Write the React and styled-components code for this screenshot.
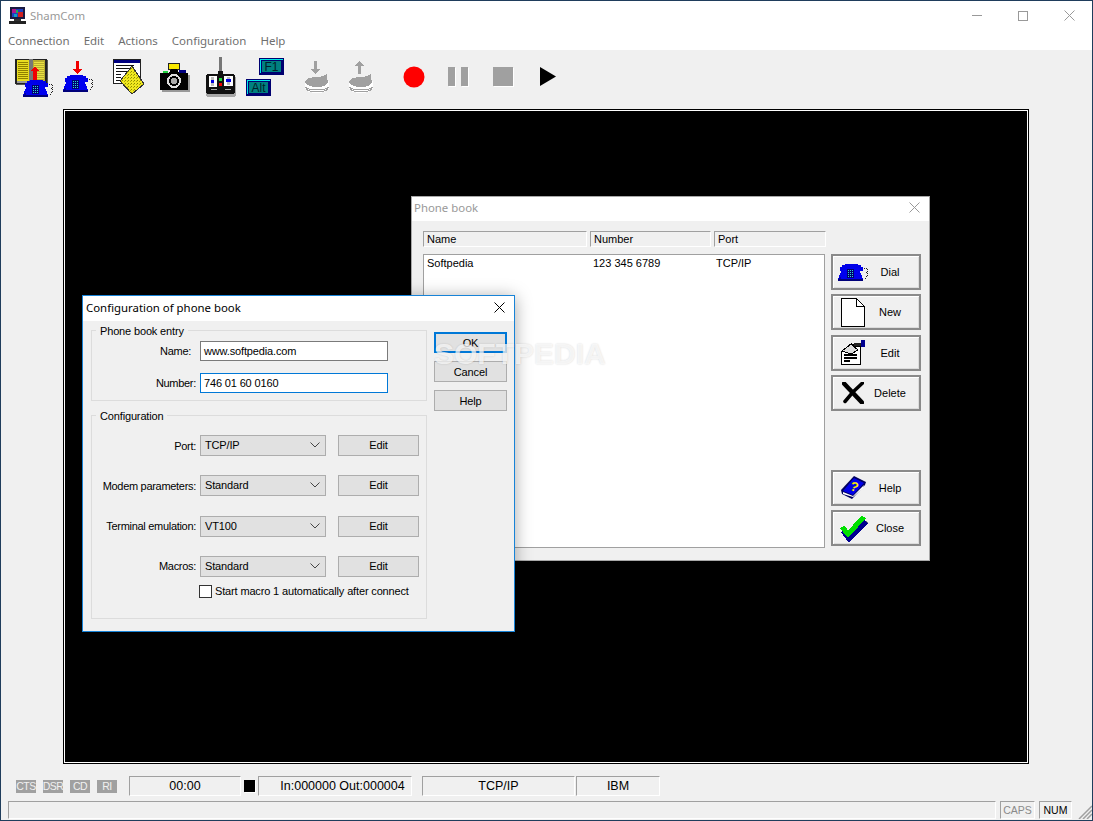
import React from "react";
import styled, { createGlobalStyle } from "styled-components";

const GlobalStyle = createGlobalStyle`
  html, body { margin: 0; padding: 0; background: #f0f0f0; }
  * { box-sizing: border-box; }
  #root { width: 1093px; height: 821px; }
`;

const UI_FONT = `"Liberation Sans", Arial, sans-serif`;
const TITLE_FONT = `"Noto Sans", "Open Sans", sans-serif`;

// Main window
const Window = styled.div`
  position: relative;
  width: 1093px;
  height: 821px;
  overflow: hidden;
  display: flex;
  flex-direction: column;
  background: #f0f0f0;
  border: 1px solid #1f3d5c;
  font-family: ${UI_FONT};
  font-size: 11px;
  color: #000;
`;

const TitleBar = styled.div`
  height: 29px;
  flex: none;
  display: flex;
  align-items: center;
  background: #fff;
  padding-left: 8px;
`;

const TitleText = styled.span`
  font-family: ${TITLE_FONT};
  font-size: 11.4px;
  color: #999;
  margin-left: 4px;
`;

const Controls = styled.div`
  margin-left: auto;
  display: flex;
`;

const ControlButton = styled.div`
  width: 46px;
  height: 29px;
  display: flex;
  align-items: center;
  justify-content: center;
`;

const MenuBar = styled.div`
  height: 20px;
  flex: none;
  display: flex;
  align-items: center;
  gap: 14px;
  padding: 1px 0 0 7px;
  background: #fff;
`;

const MenuItem = styled.span`
  font-family: ${TITLE_FONT};
  font-size: 11.5px;
  color: #6f6f6f;
`;

const Toolbar = styled.div`
  height: 54px;
  flex: none;
  display: flex;
  align-items: center;
  padding-left: 11px;
`;

const ToolGroup = styled.div`
  display: flex;
  gap: ${(p) => p.$gap || 0}px;
  margin-left: ${(p) => p.$left || 0}px;
`;

const Tool = styled.div`
  width: 44px;
  height: 54px;
  display: flex;
  align-items: center;
  justify-content: center;
`;

const Pixel = styled.svg`
  display: block;
  flex: none;
  shape-rendering: crispEdges;
`;

const Smooth = styled.svg`
  display: block;
  flex: none;
`;

const TerminalArea = styled.div`
  flex: none;
  padding: 5px 63px 0 62px;
`;

const Terminal = styled.div`
  height: 655px;
  background: #000;
  border: 1px solid #000;
  box-shadow: inset 0 0 0 1px #fff;
`;

// Status rows
const StatusRow = styled.div`
  flex: none;
  height: 20px;
  margin-top: 12px;
  display: flex;
  align-items: center;
  padding-left: 15px;
`;

const Led = styled.span`
  width: 20px;
  height: 13px;
  margin-right: 7px;
  background: #a0a0a0;
  color: #f0f0f0;
  display: flex;
  align-items: center;
  justify-content: center;
  font-size: 10.5px;
  letter-spacing: -0.5px;
  white-space: nowrap;
`;

const Sunken = styled.div`
  height: 100%;
  border-top: 1px solid #a0a0a0;
  border-left: 1px solid #a0a0a0;
  border-right: 1px solid #fff;
  border-bottom: 1px solid #fff;
`;

const StatusCell = styled(Sunken)`
  width: ${(p) => p.$width}px;
  margin-left: ${(p) => p.$left}px;
  padding-left: ${(p) => p.$inset || 0}px;
  padding-bottom: 1px;
  display: flex;
  align-items: center;
  justify-content: center;
  font-size: 12.5px;
`;

const Indicator = styled.span`
  width: 11px;
  height: 12px;
  margin-left: 3px;
  background: #000;
  box-shadow: 1px 1px 0 #fff;
`;

const BottomRow = styled.div`
  flex: none;
  height: 18px;
  margin-top: 5px;
  display: flex;
  padding-left: 7px;
`;

const MessageArea = styled(Sunken)`
  width: 988px;
`;

const KeyCell = styled(Sunken)`
  width: ${(p) => p.$width}px;
  margin-left: ${(p) => p.$left}px;
  display: flex;
  align-items: center;
  justify-content: center;
  font-size: 10.5px;
  color: ${(p) => (p.$on ? "#000" : "#8a8a8a")};
`;

const Grip = styled.div`
  margin-left: auto;
  align-self: flex-end;
`;

// Dialogs lying on the terminal
const Dialog = styled.div`
  position: absolute;
  left: ${(p) => p.$x}px;
  top: ${(p) => p.$y}px;
  width: ${(p) => p.$w}px;
  height: ${(p) => p.$h}px;
  background: #f0f0f0;
  border: 1px solid ${(p) => (p.$active ? "#1883d7" : "#a8a8a8")};
  box-shadow: ${(p) => (p.$active ? "0 2px 16px rgba(0, 0, 0, 0.35)" : "none")};
  display: flex;
  flex-direction: column;
`;

const DialogTitle = styled.div`
  flex: none;
  height: ${(p) => p.$h}px;
  background: #fff;
  display: flex;
  align-items: center;
  justify-content: space-between;
  padding: 0 9px ${(p) => (p.$active ? 2 : 4)}px ${(p) => (p.$active ? 3 : 2)}px;
  font-family: ${TITLE_FONT};
  font-size: 11.4px;
  color: ${(p) => (p.$active ? "#000" : "#999")};
`;

const BookBody = styled.div`
  flex: 1;
  display: flex;
  padding: 10px 8px 12px 11px;
`;

const BookMain = styled.div`
  width: 403px;
  display: flex;
  flex-direction: column;
  gap: 7px;
`;

const HeaderRow = styled.div`
  height: 16px;
  display: flex;
  gap: 3px;
`;

const HeaderCell = styled(Sunken)`
  width: ${(p) => p.$width}px;
  padding-left: 3px;
  display: flex;
  align-items: center;
`;

const EntryList = styled.div`
  flex: 1;
  width: 402px;
  background: #fff;
  border: 1px solid #a0a0a0;
  padding: 1px 3px;
`;

const EntryRow = styled.div`
  display: grid;
  grid-template-columns: 166px 123px 1fr;
  height: 14px;
  align-items: center;
`;

const BookButtons = styled.div`
  width: 90px;
  margin: 23px 0 0 5px;
  display: flex;
  flex-direction: column;
  height: 292px;
  justify-content: space-between;
`;

const ButtonStack = styled.div`
  display: flex;
  flex-direction: column;
  gap: ${(p) => p.$gap}px;
`;

const PanelButton = styled.div`
  height: 36px;
  display: flex;
  align-items: center;
  padding: 0 8px 0 4px;
  background: #f0f0f0;
  border: 2px solid #8a8a8a;
  box-shadow: inset 1px 1px 0 #fff, inset -1px -1px 0 #dcdcdc;
`;

const PanelIcon = styled.div`
  width: 32px;
  display: flex;
  justify-content: center;
`;

const PanelLabel = styled.span`
  flex: 1;
  text-align: center;
`;

const ConfigBody = styled.div`
  flex: 1;
  display: flex;
  gap: 7px;
  padding: 3px 0 0 8px;
  letter-spacing: -0.15px;
`;

const ConfigMain = styled.div`
  width: 336px;
  display: flex;
  flex-direction: column;
  gap: 8px;
`;

const Group = styled.fieldset`
  margin: 0;
  padding: ${(p) => p.$pad};
  height: ${(p) => p.$h}px;
  border: 1px solid #dcdcdc;
  min-width: 0;
`;

const GroupLegend = styled.legend`
  padding: 0 4px;
  margin-left: 4px;
  font-size: 11px;
  line-height: 13px;
  transform: translateY(1px);
`;

const Rows = styled.div`
  display: flex;
  flex-direction: column;
  gap: ${(p) => p.$gap}px;
`;

const FieldRow = styled.div`
  display: flex;
  align-items: center;
`;

const FieldLabel = styled.span`
  width: 104px;
  padding-right: ${(p) => p.$pad || 0}px;
  text-align: right;
  white-space: nowrap;
  margin-right: 4px;
  letter-spacing: -0.3px;
`;

const TextField = styled.div`
  width: 188px;
  height: 20px;
  padding-left: 3px;
  display: flex;
  align-items: center;
  background: #fff;
  border: 1px solid ${(p) => (p.$focus ? "#0078d7" : "#7a7a7a")};
`;

const SelectBox = styled.div`
  width: 126px;
  height: 21px;
  padding: 0 5px 1px 4px;
  display: flex;
  align-items: center;
  justify-content: space-between;
  background: #e1e1e1;
  border: 1px solid #adadad;
`;

const EditButton = styled.div`
  width: 81px;
  height: 21px;
  margin-left: 12px;
  padding-bottom: 1px;
  display: flex;
  align-items: center;
  justify-content: center;
  background: #e1e1e1;
  border: 1px solid #adadad;
`;

const CheckRow = styled.div`
  display: flex;
  align-items: center;
  gap: 3px;
  margin: 8px 0 0 107px;
`;

const CheckBox = styled.span`
  width: 13px;
  height: 13px;
  background: #fff;
  border: 1px solid #333;
`;

const ConfigButtons = styled.div`
  width: 73px;
  margin-top: 8px;
  display: flex;
  flex-direction: column;
  gap: 8px;
`;

const DialogButton = styled.div`
  height: 21px;
  display: flex;
  align-items: center;
  justify-content: center;
  background: #e1e1e1;
  border: ${(p) => (p.$default ? "2px solid #0078d7" : "1px solid #adadad")};
`;

const Watermark = styled.div`
  position: absolute;
  left: 433px;
  top: 335px;
  font-size: 30px;
  font-weight: 700;
  line-height: 36px;
  color: rgba(255, 255, 255, 0.72);
  text-shadow: 0 0 2px rgba(0, 0, 0, 0.16);
  pointer-events: none;
`;

// Pixel drawings
const PhoneShape = ({ x = 0, y = 0 }) => (
  <g transform={`translate(${x} ${y})`}>
    <path d="M26 5h2v1h1v3h-1v1h1v3h-1v2h-2" fill="none" stroke="#222" strokeDasharray="1 1" />
    <path d="M2 8V4h2V2h3V1h13v1h3v2h2v4h-6V5H9v3z" fill="#0000e8" />
    <path d="M7 5h14v2h1v3h1v2h1v3h1v3H0v-3h1v-3h1v-2h1V8h1V7h3z" fill="#0000f0" />
    <rect x="0" y="16" width="25" height="2" fill="#00007a" />
    <rect x="1" y="14" width="2" height="2" fill="#0000a8" />
    <rect x="9" y="6" width="7" height="9" fill="#000070" />
    {[0, 1, 2, 3].map((r) =>
      [0, 1, 2].map((c) => (
        <rect key={`${r}${c}`} x={10 + c * 2} y={7 + r * 2} width="1" height="1" fill="#30d8d0" />
      ))
    )}
  </g>
);

const BookPhoneIcon = () => (
  <Pixel width="38" height="40" viewBox="0 0 38 40">
    <rect x="1" y="3" width="32" height="25" fill="#555" />
    <rect x="0" y="2" width="32" height="25" fill="#222" />
    <rect x="2" y="3" width="12" height="21" fill="#e8dc20" />
    <rect x="18" y="3" width="12" height="21" fill="#b8ac30" />
    <rect x="14" y="2" width="4" height="24" fill="#777" />
    <rect x="2" y="24" width="28" height="2" fill="#999" />
    {[5, 7, 9, 11, 13, 15, 17, 19, 21].map((y) => (
      <React.Fragment key={y}>
        <rect x="3" y={y} width="10" height="1" fill="#908000" />
        <rect x="19" y={y} width="10" height="1" fill="#e8e040" />
      </React.Fragment>
    ))}
    <path d="M18 24v-10h-2l4-5 4 5h-2v10z" fill="#f00000" />
    <PhoneShape x="8" y="22" />
  </Pixel>
);

const PhoneDownIcon = () => (
  <Pixel width="30" height="32" viewBox="0 0 30 32">
    <path d="M13 0h3v8h3l-4.500 5L10 8h3z" fill="#f00000" />
    <PhoneShape x="0" y="13" />
  </Pixel>
);

const ScriptIcon = () => (
  <Pixel width="33" height="36" viewBox="0 0 33 36">
    <defs>
      <pattern id="speck" width="3" height="3" patternUnits="userSpaceOnUse">
        <rect width="3" height="3" fill="#f0e820" />
        <rect x="0" y="0" width="1" height="1" fill="#8a8a00" />
        <rect x="2" y="1" width="1" height="1" fill="#b0a800" />
      </pattern>
    </defs>
    <rect x="0" y="0" width="27" height="24" fill="#fff" stroke="#222" />
    <rect x="1" y="1" width="26" height="3" fill="#000080" />
    {[6, 9, 12, 15, 18, 21].map((y, i) => (
      <rect key={y} x="3" y={y} width={i > 2 ? 5 : 18} height="1" fill="#111" />
    ))}
    <path d="M19 7l12 18-12 10L7 22z" fill="url(#speck)" stroke="#333" />
  </Pixel>
);

const CameraIcon = () => (
  <Pixel width="30" height="29" viewBox="0 0 30 29">
    <rect x="8" y="0" width="11" height="6" fill="#f8e800" stroke="#222" />
    <rect x="3" y="8" width="5" height="2" fill="#20d040" />
    <rect x="19" y="7" width="7" height="3" fill="#000080" />
    <rect x="2" y="12" width="28" height="17" fill="#999" />
    <path d="M0 10h9l2-4h6l2 4h9v17H0z" fill="#000" />
    <circle cx="14" cy="18" r="7" fill="#ddd" />
    <circle cx="14" cy="18" r="5" fill="#000" />
    <circle cx="14" cy="18" r="3" fill="#aaa" />
  </Pixel>
);

const RemoteIcon = () => (
  <Pixel width="31" height="40" viewBox="0 0 31 40">
    <rect x="13" y="0" width="3" height="15" fill="#777" />
    <rect x="0" y="19" width="30" height="21" rx="3" fill="#a8a8a8" />
    <rect x="0" y="17" width="29" height="20" rx="3" fill="#111" />
    <rect x="12" y="14" width="5" height="5" fill="#111" />
    <rect x="3" y="19" width="8" height="11" fill="#fff" />
    <rect x="5" y="20" width="3" height="9" fill="#bbb" />
    <rect x="5" y="23" width="3" height="3" fill="#0000e0" />
    <rect x="18" y="19" width="9" height="10" fill="#fff" />
    <rect x="21" y="20" width="3" height="8" fill="#bbb" />
    <rect x="20" y="22" width="5" height="3" fill="#0000e0" />
    <rect x="13" y="21" width="3" height="3" fill="#20e040" />
    <rect x="13" y="26" width="3" height="3" fill="#f00000" />
    <rect x="5" y="32" width="6" height="1" fill="#aaa" />
    <rect x="19" y="32" width="6" height="1" fill="#aaa" />
  </Pixel>
);

const FKey = ({ x, y, label }) => (
  <g transform={`translate(${x} ${y})`}>
    <rect width="25" height="17" fill="#000070" />
    <path d="M1 1h23v1H2v13H1z" fill="#00e8e8" />
    <rect x="2" y="2" width="22" height="14" fill="#000070" />
    <rect x="3" y="3" width="19" height="11" fill="#008080" />
    <text x="12.500" y="13" textAnchor="middle" fontSize="12" fontFamily={UI_FONT} fill="#00202a">
      {label}
    </text>
  </g>
);

const KeysIcon = () => (
  <Pixel width="38" height="38" viewBox="0 0 38 38">
    <FKey x="13" y="0" label="F1" />
    <FKey x="0" y="21" label="Alt" />
  </Pixel>
);

const DiskIcon = ({ up }) => (
  <Pixel width="26" height="33" viewBox="0 0 26 33">
    <path
      d={up ? "M10 13V5H7l4.500-5L16 5h-3v8z" : "M10 0h3v8h3l-4.500 5L7 8h3z"}
      fill="#a0a0a0"
    />
    <path d="M1 21c0-3 5-5 12-5 4 0 6-1 8-2l2-2v6c1 1 2 2 2 3v6c0 2-5 5-12 5S1 30 1 27z" fill="#fff" />
    <path d="M1 21c0-3 5-5 12-5 4 0 6-1 8-2l2-2v6c1 1 1 2 1 3 0 3-5 5-11 5S1 24 1 21z" fill="#a0a0a0" />
    <path d="M1 26c2 2 6 3 12 3s10-1 12-3M2 28c2 2 6 3 11 3s9-1 11-3" fill="none" stroke="#a0a0a0" />
  </Pixel>
);

const RecordIcon = () => (
  <Smooth width="22" height="22" viewBox="0 0 22 22">
    <circle cx="11" cy="11" r="10.500" fill="#ff0000" />
  </Smooth>
);

const PauseIcon = () => (
  <Pixel width="21" height="20" viewBox="0 0 21 20">
    <rect x="1" y="1" width="7" height="19" fill="#fff" />
    <rect x="14" y="1" width="7" height="19" fill="#fff" />
    <rect x="0" y="0" width="7" height="19" fill="#a0a0a0" />
    <rect x="13" y="0" width="7" height="19" fill="#a0a0a0" />
  </Pixel>
);

const StopIcon = () => (
  <Pixel width="21" height="20" viewBox="0 0 21 20">
    <rect x="1" y="1" width="20" height="19" fill="#fff" />
    <rect x="0" y="0" width="20" height="19" fill="#a0a0a0" />
  </Pixel>
);

const PlayIcon = () => (
  <Smooth width="16" height="20" viewBox="0 0 16 20">
    <path d="M0 0l16 9.500L0 19z" fill="#000" />
  </Smooth>
);

const NewIcon = () => (
  <Pixel width="24" height="29" viewBox="0 0 24 29">
    <path d="M.5.500h15l8 8v20H.500z" fill="#fff" stroke="#000" />
    <path d="M15.500.500v8h8" fill="none" stroke="#000" />
  </Pixel>
);

const EditIcon = () => (
  <Pixel width="24" height="26" viewBox="0 0 24 26">
    <path d="M.5 11.500l10-8 4 3 5 0v18H.500z" fill="#fff" stroke="#000" />
    <path d="M1 11l9-7 7 6-7 4z" fill="#ddd" stroke="#000" />
    <rect x="13" y="3" width="8" height="3" fill="#222" />
    <rect x="20" y="0" width="4" height="7" fill="#000090" />
    {[14, 17, 20].map((y, i) => (
      <rect key={y} x="3" y={y} width={i === 2 ? 6 : 13} height="2" fill="#000" />
    ))}
  </Pixel>
);

const DeleteIcon = () => (
  <Smooth width="22" height="22" viewBox="0 0 22 22">
    <path d="M2 1.500L20 20.500" fill="none" stroke="#000" strokeWidth="4.500" strokeLinecap="round" />
    <path d="M20.500 1L11 10 3 19.500" fill="none" stroke="#000" strokeWidth="3.500" strokeLinecap="round" />
  </Smooth>
);

const HelpBookIcon = () => (
  <Smooth width="25" height="24" viewBox="0 0 25 24">
    <path d="M0 14L13 0l12 6-1 3L11 23 1 18z" fill="#000060" />
    <path d="M2 15L13 2l10 5L12 19z" fill="#0000e8" />
    <path d="M2 16l10 4 11-11-1 3-10 9-10-3z" fill="#fff" />
    <text x="9.500" y="15" fontSize="13" fontWeight="700" fontFamily={UI_FONT} fill="#ffee00" transform="rotate(18 13 10)">
      ?
    </text>
  </Smooth>
);

const CheckIcon = () => (
  <Pixel width="29" height="27" viewBox="0 0 29 27">
    <path d="M3 15l6 7L26 5" fill="none" stroke="#777" strokeWidth="4" transform="translate(2 2)" />
    <path d="M3 14l6 8L26 5" fill="none" stroke="#000090" strokeWidth="5" transform="translate(1 2)" />
    <path d="M3 12l6 7L25 2" fill="none" stroke="#00e000" strokeWidth="5" />
  </Pixel>
);

const MonitorIcon = () => (
  <Pixel width="17" height="17" viewBox="0 0 17 17">
    <rect x="1" y="0" width="15" height="12" fill="#1a1a40" />
    <rect x="3" y="2" width="11" height="8" fill="#2040c0" />
    <rect x="3" y="2" width="4" height="4" fill="#b01890" />
    <rect x="9" y="5" width="5" height="5" fill="#d02020" />
    <rect x="7" y="3" width="2" height="3" fill="#20b050" />
    <rect x="5" y="7" width="3" height="3" fill="#10a0c0" />
    <rect x="5" y="12" width="7" height="2" fill="#333" />
    <rect x="0" y="14" width="17" height="3" fill="#222" />
  </Pixel>
);

const CloseGlyph = ({ size = 11, color = "#999" }) => (
  <Smooth width={size} height={size} viewBox="0 0 11 11">
    <path d="M.5.500l10 10M10.500.500l-10 10" fill="none" stroke={color} strokeWidth="1" />
  </Smooth>
);

const Chevron = () => (
  <Smooth width="10" height="6" viewBox="0 0 10 6">
    <path d="M.5.500L5 5 9.500.500" fill="none" stroke="#444" strokeWidth="1" />
  </Smooth>
);

const GripIcon = () => (
  <Smooth width="15" height="15" viewBox="0 0 15 15">
    <path d="M15 2L2 15M15 6L6 15M15 10L10 15" fill="none" stroke="#a0a0a0" strokeWidth="1.500" />
  </Smooth>
);

const menus = ["Connection", "Edit", "Actions", "Configuration", "Help"];

const configRows = [
  { label: "Port:", value: "TCP/IP" },
  { label: "Modem parameters:", value: "Standard" },
  { label: "Terminal emulation:", value: "VT100" },
  { label: "Macros:", value: "Standard" },
];

const PhoneBookDialog = () => (
  <Dialog $x={410} $y={195} $w={519} $h={365}>
    <DialogTitle $h={24}>
      Phone book
      <CloseGlyph />
    </DialogTitle>
    <BookBody>
      <BookMain>
        <HeaderRow>
          <HeaderCell $width={164}>Name</HeaderCell>
          <HeaderCell $width={121}>Number</HeaderCell>
          <HeaderCell $width={112}>Port</HeaderCell>
        </HeaderRow>
        <EntryList>
          <EntryRow>
            <span>Softpedia</span>
            <span>123 345 6789</span>
            <span>TCP/IP</span>
          </EntryRow>
        </EntryList>
      </BookMain>
      <BookButtons>
        <ButtonStack $gap={4.4}>
          <PanelButton>
            <PanelIcon>
              <Pixel width="30" height="18" viewBox="0 0 30 18">
                <PhoneShape />
              </Pixel>
            </PanelIcon>
            <PanelLabel>Dial</PanelLabel>
          </PanelButton>
          <PanelButton>
            <PanelIcon>
              <NewIcon />
            </PanelIcon>
            <PanelLabel>New</PanelLabel>
          </PanelButton>
          <PanelButton>
            <PanelIcon>
              <EditIcon />
            </PanelIcon>
            <PanelLabel>Edit</PanelLabel>
          </PanelButton>
          <PanelButton>
            <PanelIcon>
              <DeleteIcon />
            </PanelIcon>
            <PanelLabel>Delete</PanelLabel>
          </PanelButton>
        </ButtonStack>
        <ButtonStack $gap={4}>
          <PanelButton>
            <PanelIcon>
              <HelpBookIcon />
            </PanelIcon>
            <PanelLabel>Help</PanelLabel>
          </PanelButton>
          <PanelButton>
            <PanelIcon>
              <CheckIcon />
            </PanelIcon>
            <PanelLabel>Close</PanelLabel>
          </PanelButton>
        </ButtonStack>
      </BookButtons>
    </BookBody>
  </Dialog>
);

const ConfigDialog = () => (
  <Dialog $active $x={81} $y={294} $w={433} $h={337}>
    <DialogTitle $active $h={25}>
      Configuration of phone book
      <CloseGlyph color="#000" />
    </DialogTitle>
    <ConfigBody>
      <ConfigMain>
        <Group $h={77} $pad="4px 0 0 0">
          <GroupLegend>Phone book entry</GroupLegend>
          <Rows $gap={12}>
            <FieldRow>
              <FieldLabel $pad={5}>Name:</FieldLabel>
              <TextField>www.softpedia.com</TextField>
            </FieldRow>
            <FieldRow>
              <FieldLabel>Number:</FieldLabel>
              <TextField $focus>746 01 60 0160</TextField>
            </FieldRow>
          </Rows>
        </Group>
        <Group $h={210} $pad="13px 0 0 0">
          <GroupLegend>Configuration</GroupLegend>
          <Rows $gap={19.33}>
            {configRows.map((row) => (
              <FieldRow key={row.label}>
                <FieldLabel>{row.label}</FieldLabel>
                <SelectBox>
                  {row.value}
                  <Chevron />
                </SelectBox>
                <EditButton>Edit</EditButton>
              </FieldRow>
            ))}
          </Rows>
          <CheckRow>
            <CheckBox />
            Start macro 1 automatically after connect
          </CheckRow>
        </Group>
      </ConfigMain>
      <ConfigButtons>
        <DialogButton $default>OK</DialogButton>
        <DialogButton>Cancel</DialogButton>
        <DialogButton>Help</DialogButton>
      </ConfigButtons>
    </ConfigBody>
  </Dialog>
);

export default function App() {
  return (
    <Window>
      <GlobalStyle />
      <TitleBar>
        <MonitorIcon />
        <TitleText>ShamCom</TitleText>
        <Controls>
          <ControlButton>
            <Pixel width="10" height="1" viewBox="0 0 10 1">
              <rect width="10" height="1" fill="#999" />
            </Pixel>
          </ControlButton>
          <ControlButton>
            <Pixel width="10" height="10" viewBox="0 0 10 10">
              <rect x=".5" y=".5" width="9" height="9" fill="none" stroke="#999" />
            </Pixel>
          </ControlButton>
          <ControlButton>
            <CloseGlyph />
          </ControlButton>
        </Controls>
      </TitleBar>
      <MenuBar>
        {menus.map((m) => (
          <MenuItem key={m}>{m}</MenuItem>
        ))}
      </MenuBar>
      <Toolbar>
        <ToolGroup>
          <Tool><BookPhoneIcon /></Tool>
          <Tool><PhoneDownIcon /></Tool>
        </ToolGroup>
        <ToolGroup $left={7} $gap={2}>
          <Tool><ScriptIcon /></Tool>
          <Tool><CameraIcon /></Tool>
          <Tool><RemoteIcon /></Tool>
        </ToolGroup>
        <ToolGroup>
          <Tool><KeysIcon /></Tool>
        </ToolGroup>
        <ToolGroup $left={8}>
          <Tool><DiskIcon /></Tool>
          <Tool><DiskIcon up /></Tool>
        </ToolGroup>
        <ToolGroup $left={9} $gap={0.5}>
          <Tool><RecordIcon /></Tool>
          <Tool><PauseIcon /></Tool>
          <Tool><StopIcon /></Tool>
          <Tool><PlayIcon /></Tool>
        </ToolGroup>
      </Toolbar>
      <TerminalArea>
        <Terminal />
      </TerminalArea>
      <StatusRow>
        <Led>CTS</Led>
        <Led>DSR</Led>
        <Led>CD</Led>
        <Led>RI</Led>
        <StatusCell $width={112} $left={5}>00:00</StatusCell>
        <Indicator />
        <StatusCell $width={154} $left={3} $inset={15}>In:000000 Out:000004</StatusCell>
        <StatusCell $width={153} $left={10}>TCP/IP</StatusCell>
        <StatusCell $width={84} $left={1}>IBM</StatusCell>
      </StatusRow>
      <BottomRow>
        <MessageArea />
        <KeyCell $width={35} $left={4}>CAPS</KeyCell>
        <KeyCell $on $width={33} $left={4}>NUM</KeyCell>
        <Grip>
          <GripIcon />
        </Grip>
      </BottomRow>
      <PhoneBookDialog />
      <ConfigDialog />
      <Watermark>SOFTPEDIA</Watermark>
    </Window>
  );
}
